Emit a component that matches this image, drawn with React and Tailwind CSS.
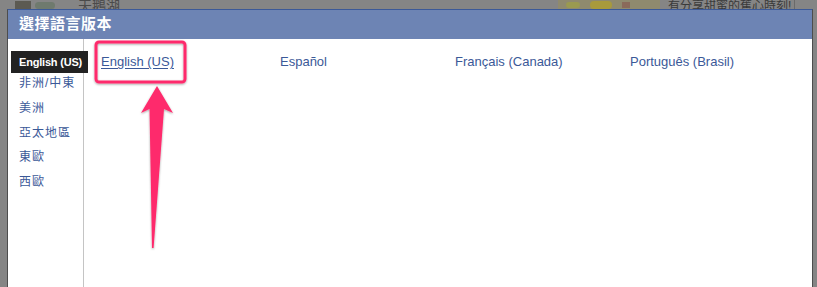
import React from "react";

const regions = ["非洲/中東", "美洲", "亞太地區", "東歐", "西歐"];

const languages = [
  { label: "English (US)", width: "w-[179px]", underline: true },
  { label: "Español", width: "w-[175px]" },
  { label: "Français (Canada)", width: "w-[175px]" },
  { label: "Português (Brasil)", width: "w-[175px]" },
];

const font = "font-['Liberation_Sans','Noto_Sans_CJK_TC',sans-serif]";

const Backdrop = () => (
  <div className="h-[9px] flex items-start overflow-hidden">
    <div className="shrink-0 ml-[15px] mt-[1px] w-[16px] h-[8px] bg-[#5c5a52]" />
    <div className="shrink-0 ml-[4px] mt-[2px] w-[20px] h-[7px] rounded-full bg-[#6f7a6e]" />
    <div className="shrink-0 ml-[23px] w-[50px] h-[9px] leading-[9px] pt-[2px] text-[14px] text-[#4a4a4a] overflow-hidden whitespace-nowrap">
      天鵝湖
    </div>
    <div className="shrink-0 ml-[430px] w-[102px] h-[9px] bg-[#8f8a6e] flex items-center gap-[10px] px-[8px]">
      <div className="w-[14px] h-[6px] rounded-full bg-[#9a9a50]" />
      <div className="w-[22px] h-[8px] rounded-full bg-[#a89a3c]" />
      <div className="w-[8px] h-[6px] bg-[#8a6a5a]" />
    </div>
    <div className="shrink-0 ml-[8px] w-[124px] h-[9px] leading-[9px] pt-[2px] text-[12px] text-[#3a3a3a] whitespace-nowrap overflow-hidden">
      有分享甜蜜的蕉心時刻!
    </div>
    <div className="shrink-0 ml-[2px] w-[1px] h-[9px] bg-[#6a6a6a]" />
  </div>
);

const Arrow = () => (
  <svg
    className="absolute left-0 top-0 pointer-events-none"
    width="817"
    height="287"
    viewBox="0 0 817 287"
  >
    <defs>
      <filter id="sh" x="-50%" y="-50%" width="200%" height="200%">
        <feDropShadow dx="0" dy="1" stdDeviation="1" floodColor="#000" floodOpacity="0.35" />
      </filter>
    </defs>
    <g filter="url(#sh)">
      <rect x="96" y="42" width="89" height="40" rx="3" fill="none" stroke="#fe2c6c" strokeWidth="3" />
      <polygon
        points="157,86 173,113 164,109 153.6,248 152,248 149.5,109 141,113"
        fill="#fe2c6c"
      />
    </g>
  </svg>
);

export default function App() {
  return (
    <div className={`relative w-[817px] h-[287px] overflow-hidden bg-[#858585] ${font}`}>
      <Backdrop />
      <div className="ml-[7px] w-[806px] h-[290px] bg-white border-l border-r border-[#4d4d4d] border-t border-t-[#3b5998] flex flex-col">
        <div className="h-[29px] bg-[#6d84b4] flex items-center pl-[11px] text-white font-bold text-[15px] tracking-[0.5px]">
          選擇語言版本
        </div>
        <div className="flex flex-1">
          <div className="w-[76px] shrink-0 border-r border-[#c4c4c4] pt-[12px]">
            <div className="relative z-10 ml-[3px] w-[77px] h-[22px] bg-[#222222] text-white font-bold text-[11px] tracking-[-0.2px] flex items-center pl-[8px] whitespace-nowrap">
              English (US)
            </div>
            <div className="-mt-[2px] flex flex-col">
              {regions.map((r) => (
                <div
                  key={r}
                  className="h-[24.7px] flex items-center pl-[11px] text-[12px] text-[#3b5998] tracking-[1px]"
                >
                  {r}
                </div>
              ))}
            </div>
          </div>
          <div className="flex pl-[17px] pt-[13px] h-fit">
            {languages.map((l) => (
              <div
                key={l.label}
                className={`${l.width} text-[13px] text-[#3b5998] whitespace-nowrap ${
                  l.underline ? "underline underline-offset-2" : ""
                }`}
              >
                {l.label}
              </div>
            ))}
          </div>
        </div>
      </div>
      <Arrow />
    </div>
  );
}
